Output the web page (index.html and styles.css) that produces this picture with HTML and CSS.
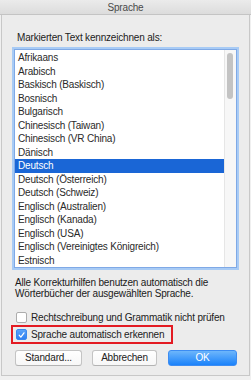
FILE: index.html
```html
<!DOCTYPE html>
<html lang="de">
<head>
<meta charset="utf-8">
<link rel="stylesheet" href="styles.css">
</head>
<body>
<div class="window">
  <div class="titlebar">Sprache</div>
  <div class="sheet">
    <div class="label">Markierten Text kennzeichnen als:</div>
    <div class="listbox">
      <ul class="items">
        <li>Afrikaans</li>
        <li>Arabisch</li>
        <li>Baskisch (Baskisch)</li>
        <li>Bosnisch</li>
        <li>Bulgarisch</li>
        <li>Chinesisch (Taiwan)</li>
        <li>Chinesisch (VR China)</li>
        <li>Dänisch</li>
        <li class="selected">Deutsch</li>
        <li>Deutsch (Österreich)</li>
        <li>Deutsch (Schweiz)</li>
        <li>Englisch (Australien)</li>
        <li>Englisch (Kanada)</li>
        <li>Englisch (USA)</li>
        <li>Englisch (Vereinigtes Königreich)</li>
        <li>Estnisch</li>
      </ul>
      <div class="scrollbar"><div class="thumb"></div></div>
    </div>
    <p class="desc">Alle Korrekturhilfen benutzen automatisch die Wörterbücher der ausgewählten Sprache.</p>
    <div class="checks">
      <div class="check-row">
        <span class="box"></span>
        <span>Rechtschreibung und Grammatik nicht prüfen</span>
      </div>
      <div class="check-row highlight">
        <span class="box checked"><svg viewBox="0 0 10 10" width="10" height="10"><path d="M2.4 5.2 L4.3 7.3 L7.8 2.6" fill="none" stroke="#fff" stroke-width="1.4" stroke-linecap="round" stroke-linejoin="round"/></svg></span>
        <span>Sprache automatisch erkennen</span>
      </div>
    </div>
    <div class="buttons">
      <button class="btn std">Standard...</button>
      <button class="btn cancel">Abbrechen</button>
      <button class="btn ok">OK</button>
    </div>
  </div>
</div>
</body>
</html>
```
FILE: styles.css
```css
html, body {
  margin: 0;
  padding: 0;
}
body {
  width: 251px;
  height: 380px;
  background: #f0f0f0;
  font-family: "Liberation Sans", Arial, sans-serif;
  font-size: 10px;
  letter-spacing: -0.18px;
  color: #222;
  overflow: hidden;
}
.window {
  width: 251px;
}
.titlebar {
  height: 14px;
  line-height: 16px;
  text-align: center;
  font-size: 10px;
  color: #4a4a4a;
  background: linear-gradient(#ebebeb, #dcdcdc);
  border-bottom: 1px solid #c4c4c4;
}
.sheet {
  margin: 0 1px;
  background: #ececec;
  border: 1px solid #c8c8c8;
  border-top: none;
  height: 360px;
  padding: 0;
  box-sizing: content-box;
}
.label {
  padding: 16px 0 0 15px;
  height: 16px;
  line-height: 13px;
  color: #222;
}
.listbox {
  margin: 2px 0 0 12px;
  width: 221px;
  height: 217px;
  border: 1px solid #7fa9e6;
  box-shadow: 0 0 0 2px #a8cbf5;
  background: #fff;
  display: flex;
}
.items {
  list-style: none;
  margin: 0;
  padding: 1px 0 0 0;
  flex: 1;
  overflow: hidden;
}
.items li {
  height: 13.5px;
  line-height: 13.5px;
  padding-left: 3px;
  color: #2a2a2a;
  white-space: nowrap;
}
.items li.selected {
  background: #1a66d6;
  color: #fff;
}
.scrollbar {
  width: 11px;
  background: #f7f7f7;
  border-left: 1px solid #e6e6e6;
}
.thumb {
  margin: 3px 0 0 2px;
  width: 6px;
  height: 46px;
  border-radius: 3px;
  background: #c3c3c3;
}
.desc {
  margin: 10px 0 0 13px;
  line-height: 10.5px;
  width: 228px;
  color: #1a1a1a;
}
.checks {
  margin-top: 10px;
  display: flex;
  flex-direction: column;
  align-items: flex-start;
}
.check-row {
  display: flex;
  align-items: center;
  gap: 4px;
  height: 16px;
  padding-left: 14px;
  color: #222;
}
.check-row.highlight {
  margin-left: 9px;
  padding: 0 7px 0 3px;
  border: 2px solid #e31b23;
  height: 15px;
}
.box {
  width: 9px;
  height: 9px;
  border: 1px solid #adadad;
  border-radius: 2px;
  background: #fff;
  display: inline-flex;
  align-items: center;
  justify-content: center;
  flex: none;
}
.box.checked {
  border-color: #3a87ee;
  background: linear-gradient(#5aa2f8, #2f80f2);
}
.box.checked svg {
  display: block;
}
.buttons {
  display: flex;
  margin: 6px 0 0 13px;
}
.btn {
  height: 16px;
  font-family: "Liberation Sans", Arial, sans-serif;
  font-size: 10px;
  letter-spacing: -0.18px;
  color: #222;
  border: 1px solid #c4c4c4;
  border-bottom-color: #b3b3b3;
  border-radius: 3px;
  background: linear-gradient(#ffffff, #f7f7f7);
  padding: 0;
  margin: 0;
  line-height: 14px;
}
.std {
  width: 67px;
}
.cancel {
  width: 65px;
  margin-left: 10px;
}
.ok {
  width: 69px;
  margin-left: 11px;
  color: #fff;
  border-color: #3c8cf2;
  background: linear-gradient(#6db6fb, #1b82fa);
}
```
